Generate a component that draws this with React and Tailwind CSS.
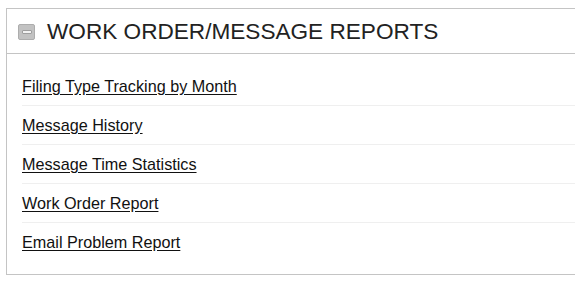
import React from 'react';

const reports = [
  'Filing Type Tracking by Month',
  'Message History',
  'Message Time Statistics',
  'Work Order Report',
  'Email Problem Report',
];

export default function App() {
  return (
    <div className="w-[575px] h-[291px] bg-white pt-2 pl-[6px] overflow-hidden" style={{ fontFamily: '"Liberation Sans", Arial, sans-serif' }}>
      <div className="border border-[#c4c4c4] border-r-0 h-[267px]">
        {/* Header */}
        <div className="h-[45px] flex items-center px-[11px] border-b border-[#c4c4c4]">
          <span className="w-[17px] h-[16px] rounded-[2px] bg-[#c2c2c2] border border-[#adadad] flex items-center justify-center mr-[12px] mt-[2px]">
            <span className="w-[10px] h-[4px] bg-[#f2f2f2] border border-[#9e9e9e] rounded-[1px]" />
          </span>
          <h2 className="text-[22.6px] text-[#222] leading-none mt-[2px]">WORK ORDER/MESSAGE REPORTS</h2>
        </div>
        {/* Links */}
        <ul className="pt-[13px] pl-[15px]">
          {reports.map((r, i) => (
            <li
              key={r}
              className={`h-[39px] flex items-center ${i < reports.length - 1 ? 'border-b border-[#efefef]' : ''}`}
            >
              <a href="#" className="text-[16.2px] text-[#111] underline underline-offset-2">
                {r}
              </a>
            </li>
          ))}
        </ul>
      </div>
    </div>
  );
}
